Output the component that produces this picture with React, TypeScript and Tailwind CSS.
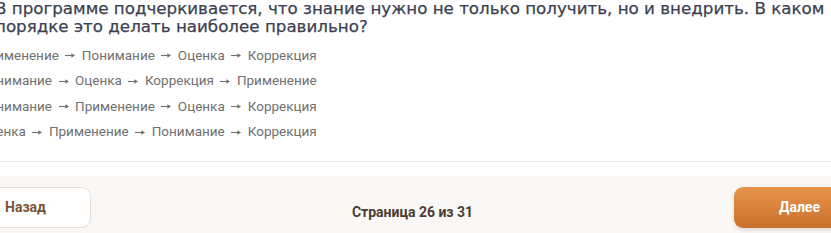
import React from 'react';

const options = [
    ['Применение', 'Понимание', 'Оценка', 'Коррекция'],
    ['Понимание', 'Оценка', 'Коррекция', 'Применение'],
    ['Понимание', 'Применение', 'Оценка', 'Коррекция'],
    ['Оценка', 'Применение', 'Понимание', 'Коррекция'],
];

function Arrow() {
    return (
        <svg className="mx-[6.5px] translate-y-[1px] shrink-0" width="10" height="7" viewBox="0 0 10 7" fill="none">
            <path d="M0 3.5H8" stroke="currentColor" strokeWidth="1.1" />
            <path d="M6.4 1.2L10 3.5L6.4 5.8Z" fill="currentColor" />
        </svg>
    );
}

export default function App() {
    return (
        <div className="w-[831px] h-[233px] overflow-hidden bg-white">
            <div className="-ml-[40px] w-[905px]">
                {/* Question */}
                <div className="pl-[35px] pr-[30px] -mt-[1px]">
                    <h2 className="text-[16.7px] leading-[18px] font-medium text-[#3b4150] [-webkit-text-stroke:0.25px_#3b4150] font-['DejaVu_Sans',sans-serif]">
                        В программе подчеркивается, что знание нужно не только получить, но и внедрить. В каком порядке это делать наиболее правильно?
                    </h2>
                </div>

                {/* Options */}
                <div className="pl-[19px] mt-[7px] flex flex-col font-['Roboto',sans-serif] text-[13.5px] text-[#707070]">
                    {options.map((steps) => (
                        <div key={steps.join()} className="h-[25.6px] flex items-center">
                            {steps.map((s, i) => (
                                <React.Fragment key={s}>
                                    {i > 0 && <Arrow />}
                                    <span>{s}</span>
                                </React.Fragment>
                            ))}
                        </div>
                    ))}
                </div>

                <div className="mt-[17px] border-t border-[#ececec]" />

                {/* Footer */}
                <div className="mt-[14px] bg-[#faf8f6] h-[60px] pt-[11px] flex items-start justify-between font-['Roboto',sans-serif]">
                    <button className="h-[41px] w-[131px] bg-white border border-[#e9dfd5] rounded-[9px] text-[14px] font-bold text-[#7a5436]">
                        Назад
                    </button>
                    <span className="mt-[15px] text-[14px] font-bold text-[#4a3c34]">Страница 26 из 31</span>
                    <button className="h-[41px] w-[131px] rounded-[9px] bg-gradient-to-b from-[#e8944c] to-[#c9712d] text-[14px] font-bold text-white shadow-[0_2px_4px_rgba(0,0,0,0.12)]">
                        Далее
                    </button>
                </div>
            </div>
        </div>
    );
}
